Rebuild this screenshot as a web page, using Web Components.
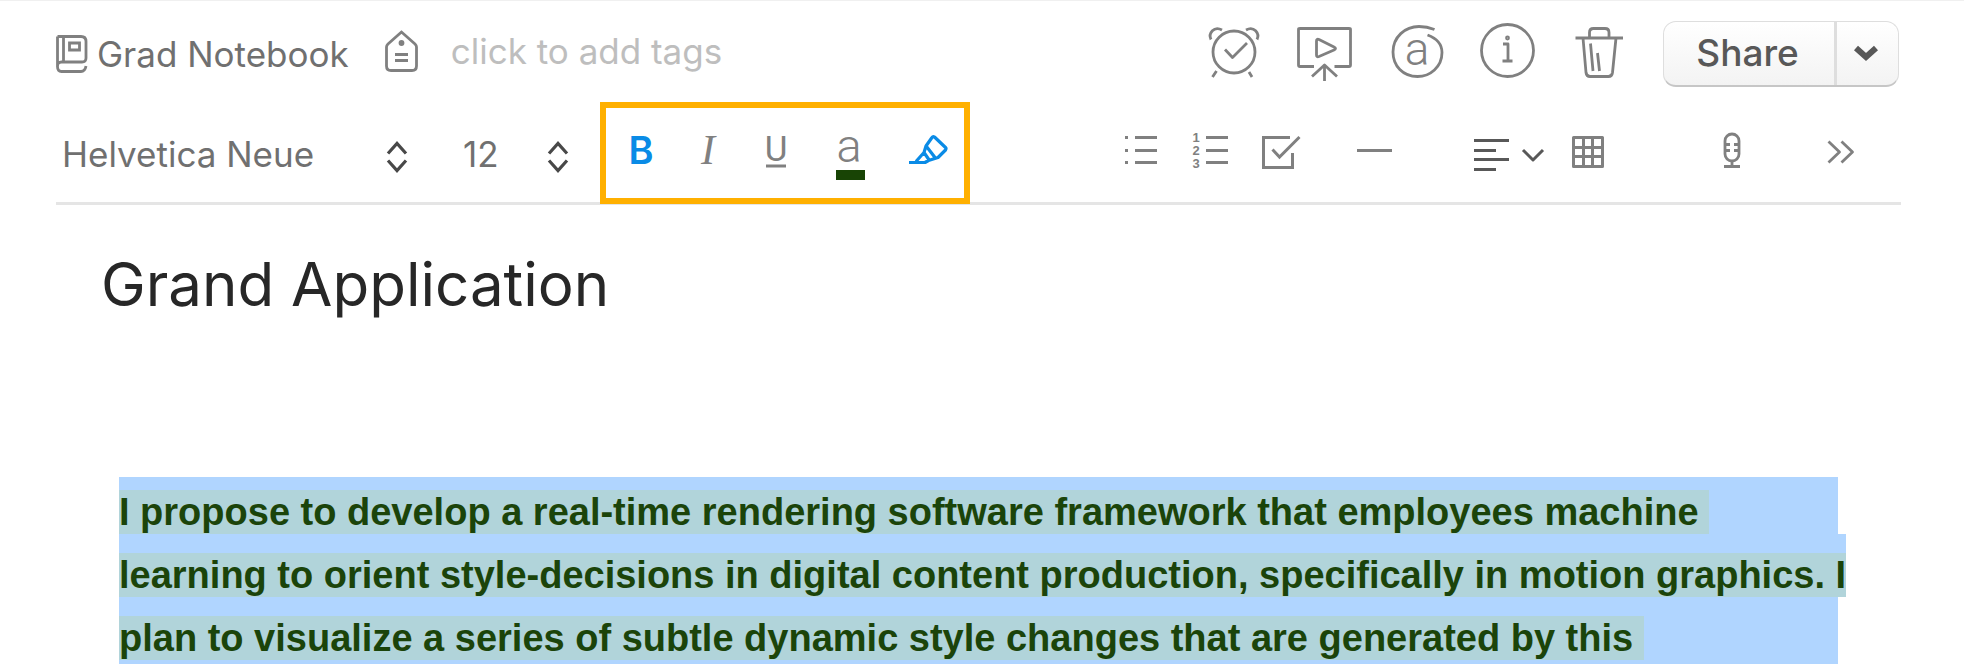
<!DOCTYPE html>
<html lang="en">
<head>
<meta charset="utf-8">
<title>Grand Application</title>
<style>
  body { margin: 0; background: #fff; font-family: Inter, "Liberation Sans", sans-serif; color: #707070; }
</style>
</head>
<body>
<note-window>
  <note-header slot="header">
    <icon-button label="Set reminder"><svg width="91" height="66" viewBox="0 0 91 66"><circle cx="45" cy="31" r="21"/><path d="M36 28.5l7.5 8L58 22M22 18.500c-3-6 3-14 11-9.500M68 18.500c3-6-3-14-11-9.500M27.500 50l-4 6M60 51l3 5"/></svg></icon-button>
    <icon-button label="Present"><svg width="91" height="66" viewBox="0 0 91 66"><path d="M34 45.500H20q-1.500 0-1.500-1.500V8.500Q18.500 7.500 20 7.500H69q1.500 0 1.500 1V44q0 1.500-1.500 1.500H54.500M36.500 20v14q0 2.500 2.500 1.500l15-6.500q3-1.500 0-3l-15-7.500q-2.500-1-2.500 1.500zM44.500 60V44M32 55.500l12.500-11.500L57 55.500"/></svg></icon-button>
    <icon-button label="Annotate"><svg width="91" height="66" viewBox="0 0 91 66"><path d="M56.500 14C66 17.500 71 24 71 31.500C71 46 59 55.500 46.500 55.500C32 55.500 22 45 22 31C22 16 34 5.500 48 5.500Q56 5.500 63.500 8.500"/><text x="46" y="44" font-family="Roboto" font-size="46" font-weight="300">a</text></svg></icon-button>
    <icon-button label="Note info"><svg width="91" height="66" viewBox="0 0 91 66"><circle cx="45.500" cy="29.500" r="26"/><circle cx="45.500" cy="17" r="1"/><path d="M41 23h5v17M40.500 40h10"/></svg></icon-button>
    <icon-button label="Delete note"><svg width="91" height="66" viewBox="0 0 91 66"><path d="M22.500 17H70M36.500 17v-5.500q0-4 4-4H52q4 0 4 4V17M30 17l3 34.500q.5 4 4 4H55.500q3.500 0 4-4L63 17M37.500 22.500L40 50M44.500 32L46.500 50"/></svg></icon-button>
    <share-button>Share</share-button>
  </note-header>
  <note-toolbar slot="toolbar"></note-toolbar>
  <note-content>
    <span slot="title">Grand Application</span>
    <selected-line first>I propose to develop a real-time rendering software framework that employees machine </selected-line>
    <selected-line wide>learning to orient style-decisions in digital content production, specifically in motion graphics. I</selected-line>
    <selected-line>plan to visualize a series of subtle dynamic style changes that are generated by this </selected-line>
  </note-content>
</note-window>

<script>
const define = (name, html, setup) => {
  const template = document.createElement('template');
  template.innerHTML = html;
  customElements.define(name, class extends HTMLElement {
    constructor() {
      super();
      this.attachShadow({ mode: 'open' }).append(template.content.cloneNode(true));
    }
    connectedCallback() { if (setup) setup(this, this.shadowRoot); }
  });
};

define('note-window', `
  <style>
    :host { display: flex; flex-direction: column; box-sizing: border-box; height: 100vh; overflow: hidden; border-top: 1px solid #f0f0f0; }
    header { padding: 20px 63px 0 56px; }
    main { flex: 1; display: flex; }
  </style>
  <header><slot name="header"></slot><slot name="toolbar"></slot></header>
  <main><slot></slot></main>`);

define('icon-button', `
  <style>
    :host { display: block; }
    button { display: block; padding: 0; border: 0; background: none; color: var(--icon, #808080); font: inherit; cursor: pointer; }
    ::slotted(svg) { display: block; fill: none; stroke: currentColor; stroke-width: 2.8; stroke-linejoin: round; text-anchor: middle; }
  </style>
  <button type="button"><slot></slot></button>`, (host, root) => {
    root.querySelector('button').setAttribute('aria-label', host.getAttribute('label'));
    host.querySelectorAll('text').forEach(t => { t.style.fill = 'currentColor'; t.style.stroke = 'none'; });
  });

define('share-button', `
  <style>
    :host { display: flex; box-sizing: border-box; width: 236px; height: 66px; margin: 0 2px 0 19px; border: 1px solid #dedede; border-bottom: 2px solid #c6c6c6; border-radius: 13px; background: linear-gradient(#fff, #f3f3f3); color: #585858; }
    button { padding: 0 3px 2px 0; border: 0; background: none; color: inherit; font: 500 37px Inter, sans-serif; cursor: pointer; }
    .main { flex: 1; border-right: 3px solid #dedede; }
    .more { width: 61px; }
    svg { display: block; margin: auto; }
  </style>
  <button class="main" type="button"><slot></slot></button>
  <button class="more" type="button" aria-label="More sharing options"><svg width="26" height="18" viewBox="0 0 26 18"><path d="M3 4l10 9L23 4" fill="none" stroke="currentColor" stroke-width="6"/></svg></button>`);

define('note-header', `
  <style>
    :host { display: flex; align-items: center; height: 66px; font-size: 35px; line-height: 42px; }
    a { display: flex; align-items: center; gap: 9px; color: #707070; text-decoration: none; white-space: nowrap; }
    label { display: flex; align-items: center; flex: 1; min-width: 0; gap: 33px; margin-left: 36px; padding-bottom: 6px; }
    input { flex: 1; min-width: 0; padding: 0; border: 0; outline: 0; font: inherit; background: none; }
    input::placeholder { color: #bebebe; opacity: 1; }
    svg { display: block; flex: none; fill: none; stroke: #808080; stroke-width: 2.8; }
    nav { display: flex; }
  </style>
  <a href="#notebook"><svg width="32" height="38" viewBox="0 0 32 38"><path d="M1.500 1.500H25q5 0 5 5V23q0 4-4 4H5.500q-4 0-4 4.500q0 5 4 5H25q4 0 5-5.500M1.500 1.500V32M7.500 1.500V27M13.500 8h10v7h-10z"/></svg>Grad Notebook</a>
  <label><svg width="33" height="42" viewBox="0 0 33 42" role="img" aria-label="Tags"><path d="M16.500 2L3 14q-1.500 1.500-1.500 3V36q0 4.500 4.500 4.500H27q4.500 0 4.500-4.500V17q0-1.500-1.500-3zM10 24.500h13M10 30.500h13"/><circle cx="16.500" cy="13" r="1.500"/></svg><input type="text" placeholder="click to add tags"></label>
  <nav aria-label="Note actions"><slot></slot></nav>`);

define('picker-field', `
  <style>
    :host { display: grid; grid-template-columns: 1fr 22px; height: 100px; }
    label { display: contents; }
    select { grid-area: 1 / 1 / 2 / 3; appearance: none; box-sizing: border-box; min-width: 0; margin: 0; padding: 4px 0 0; border: 0; background: none; color: #707070; font: 400 35px Inter, sans-serif; }
    svg { grid-area: 1 / 2; pointer-events: none; fill: none; stroke: #484848; stroke-width: 3.2; }
  </style>
  <label><select></select><svg width="22" height="100" viewBox="0 0 22 100" aria-hidden="true"><path d="M2 51.500L11 41.500l9 10M2 58.500l9 10 9-10"/></svg></label>`, (host, root) => {
    const select = root.querySelector('select');
    select.setAttribute('aria-label', host.getAttribute('label'));
    select.add(new Option(host.getAttribute('value')));
  });

define('format-group', `
  <style>
    :host { display: flex; position: relative; height: 90px; margin-bottom: -2px; border: 6px solid #ffb000; background: #fff; }
    .on { --icon: #0a8be6; }
  </style>
  <icon-button class="on" label="Bold"><svg width="71" height="90" viewBox="0 0 71 90"><text x="35" y="56" font-family="Inter" font-size="38" font-weight="600">B</text></svg></icon-button>
  <icon-button label="Italic"><svg width="63" height="90" viewBox="0 0 63 90"><text x="31" y="56" font-family="Liberation Serif" font-size="42" font-style="italic">I</text></svg></icon-button>
  <icon-button label="Underline"><svg width="72" height="90" viewBox="0 0 72 90"><text x="36" y="53" font-family="Roboto" font-size="35" font-weight="400">U</text><path d="M26 58h20" style="stroke-width:3"/></svg></icon-button>
  <icon-button label="Text color"><svg width="78" height="90" viewBox="0 0 78 90"><text x="37" y="54" font-family="Roboto" font-size="47" font-weight="300">a</text><path d="M24 62h29v10h-29z" style="fill:#184405;stroke:none"/></svg></icon-button>
  <icon-button class="on" label="Highlight"><svg width="74" height="90" viewBox="0 0 74 90"><path d="M19 54.500H35L38.500 52.500L48 49.500L55.500 42q1-1.500 0-2.500L44.500 29q-1.500-1-2.500 0.500L36 38l-2 6.500L26 53.500M34 44.500l5.500 8M36.500 38.500l8.500 11" style="stroke-width:3.2"/></svg></icon-button>`);

define('note-toolbar', `
  <style>
    :host { display: flex; height: 100px; margin-top: 15px; border-bottom: 3px solid #e5e5e5; }
    .font { width: 346px; margin-left: 6px; }
    .size { width: 106px; margin: 0 31px 0 55px; }
    .tools { display: flex; margin-left: auto; padding-right: 25px; }
    .rule { margin-left: 24px; }
    .align { margin-left: 54px; --icon: #585858; }
    .audio { margin-left: 72px; }
    .more { margin-left: 40px; }
    text { font-family: "Liberation Sans", sans-serif; font-size: 13px; font-weight: 700; }
  </style>
  <picker-field class="font" label="Font" value="Helvetica Neue"></picker-field>
  <picker-field class="size" label="Font size" value="12"></picker-field>
  <format-group></format-group>
  <div class="tools">
    <icon-button label="Bulleted list"><svg width="70" height="100" viewBox="0 0 70 100"><path d="M19 35.500h3M29 35.500h22M19 48.500h3M29 48.500h22M19 60.500h3M29 60.500h22" style="stroke-width:3"/></svg></icon-button>
    <icon-button label="Numbered list"><svg width="70" height="100" viewBox="0 0 70 100"><text x="20" y="40">1</text><text x="20" y="53">2</text><text x="20" y="66">3</text><path d="M30 35.500h22M30 48.500h22M30 60.500h22" style="stroke-width:3"/></svg></icon-button>
    <icon-button label="Checkbox"><svg width="70" height="100" viewBox="0 0 70 100"><path d="M44 35.500H17.500V65.500H46.500V51M26.500 47.500l7 7.500L53.500 35" style="stroke-width:3;stroke-linejoin:miter"/></svg></icon-button>
    <icon-button class="rule" label="Horizontal rule"><svg width="70" height="100" viewBox="0 0 70 100"><path d="M17 48.500h35" style="stroke-width:3"/></svg></icon-button>
    <icon-button class="align" label="Alignment"><svg width="90" height="100" viewBox="0 0 90 100"><path d="M10 38.500h35M10 48.500h22M10 57.500h35M10 67.500h22M59 48l10 10 10-10" style="stroke-width:3"/></svg></icon-button>
    <icon-button label="Table"><svg width="70" height="100" viewBox="0 0 70 100"><path d="M19.500 35.500h29v29h-29zM29.500 35.500v29M38.500 35.500v29M19.500 45.500h29M19.500 54.500h29" style="stroke-width:3"/></svg></icon-button>
    <icon-button class="audio" label="Record audio"><svg width="70" height="100" viewBox="0 0 70 100"><rect x="29" y="32" width="14" height="27" rx="7"/><path d="M36 59v5M28 64.500h16M29 42.500h5M38 42.500h5M29 48.500h5M38 48.500h5"/></svg></icon-button>
    <icon-button class="more" label="More tools"><svg width="70" height="100" viewBox="0 0 70 100"><path d="M22.500 39.500L33.500 50L22.500 60.500M35.500 39.500L46.500 50L35.500 60.500"/></svg></icon-button>
  </div>`);

define('note-content', `
  <style>
    :host { display: flex; flex: 1; flex-direction: column; min-width: 0; padding: 43px 126px 0 101px; }
    h1 { margin: 0; color: #272727; font-size: 60px; font-weight: 400; line-height: 72px; }
    div { flex: 1; margin: 157px 0 0 18px; background: #b0d5ff; }
  </style>
  <h1><slot name="title"></slot></h1>
  <div><slot></slot></div>`);

define('selected-line', `
  <style>
    :host { display: flex; align-items: flex-end; box-sizing: border-box; height: 63px; background: #b0d5ff; font: 700 38px/44px "Liberation Sans", Arial, sans-serif; white-space: pre; }
    :host([first]) { height: 57px; }
    :host([wide]) { margin-right: -8px; }
    mark { background: #b1d4da; color: #1b440a; }
  </style>
  <mark><slot></slot></mark>`);
</script>
</body>
</html>
